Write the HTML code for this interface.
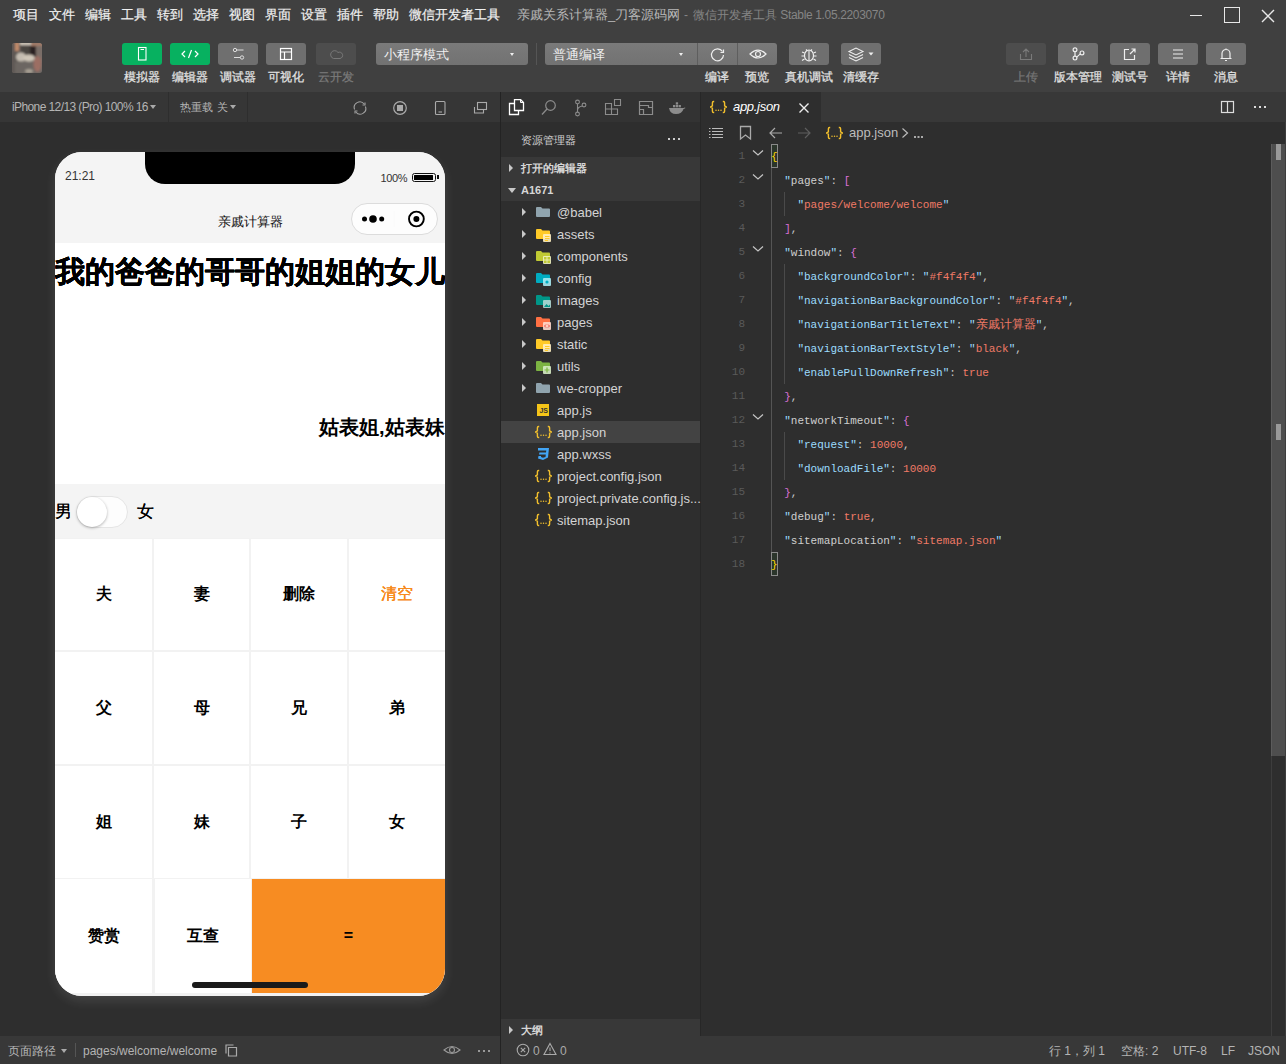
<!DOCTYPE html>
<html><head><meta charset="utf-8">
<style>
*{box-sizing:border-box;margin:0;padding:0}
html,body{width:1286px;height:1064px;overflow:hidden;background:#2e2e2e;font-family:"Liberation Sans",sans-serif;color:#ccc}
.a{position:absolute}
.top{left:0;top:0;width:1286px;height:92px;background:#404040}
.menu{top:7px;font-size:13px;color:#f0f0f0;line-height:16px;white-space:nowrap;-webkit-text-stroke:0.2px}
.title{top:7px;left:517px;font-size:13px;color:#9c9c9c;line-height:16px;white-space:nowrap}
.btn{top:43px;width:40px;height:22px;border-radius:3px;background:#6f6f6f}
.btn.g{background:#07b160}
.btn.d{background:#4d4d4d}
.lbl{top:70px;font-size:12px;line-height:15px;color:#e2e2e2;white-space:nowrap;text-align:center;width:60px;-webkit-text-stroke:0.25px}
.dd{top:43px;height:22px;border-radius:3px;background:linear-gradient(#7a7a7a,#727272);font-size:13px;color:#f0f0f0;line-height:16px;padding-top:4px}
.caret{width:0;height:0;border-left:4px solid transparent;border-right:4px solid transparent;border-top:5px solid #eee}
svg{display:block}
.ic{fill:none}
</style></head><body>
<div class="a top"></div>
<!-- menu -->
<div class="a menu" style="left:13px">项目</div>
<div class="a menu" style="left:49px">文件</div>
<div class="a menu" style="left:85px">编辑</div>
<div class="a menu" style="left:121px">工具</div>
<div class="a menu" style="left:157px">转到</div>
<div class="a menu" style="left:193px">选择</div>
<div class="a menu" style="left:229px">视图</div>
<div class="a menu" style="left:265px">界面</div>
<div class="a menu" style="left:301px">设置</div>
<div class="a menu" style="left:337px">插件</div>
<div class="a menu" style="left:373px">帮助</div>
<div class="a menu" style="left:409px">微信开发者工具</div>
<div class="a title" style="color:#b8b8b8">亲戚关系计算器_刀客源码网</div><div class="a title" style="left:684px;font-size:12px;color:#858585">-</div><div class="a title" style="left:693px;font-size:12px;color:#858585">微信开发者工具 <span style="letter-spacing:-0.35px">Stable 1.05.2203070</span></div>
<!-- window controls -->
<div class="a" style="left:1190px;top:14.5px;width:12px;height:1px;background:#e8e8e8"></div>
<div class="a" style="left:1224px;top:7px;width:16px;height:16px;border:1.5px solid #e8e8e8"></div>
<svg class="a" style="left:1261px;top:9px" width="14" height="14"><path d="M1 1L13 13M13 1L1 13" stroke="#e8e8e8" stroke-width="1.4"/></svg>

<!-- avatar -->
<svg class="a" style="left:12px;top:43px" width="30" height="30"><defs><filter id="bl" x="-20%" y="-20%" width="140%" height="140%"><feGaussianBlur stdDeviation="1.3"/></filter><clipPath id="cp"><rect width="30" height="30" rx="2.5"/></clipPath></defs><g clip-path="url(#cp)"><rect width="30" height="30" fill="#6e6864"/><g filter="url(#bl)">
<rect x="-2" y="-2" width="12" height="34" fill="#5e5854"/>
<rect x="3" y="-1" width="4" height="9" fill="#c08a6a"/>
<rect x="8" y="-1" width="11" height="3" fill="#d6ccbe"/>
<rect x="9" y="3" width="12" height="10" fill="#4a4541"/>
<rect x="19" y="-1" width="13" height="4" fill="#a07a68"/>
<rect x="18" y="3" width="6" height="11" fill="#2a2020"/>
<rect x="24" y="3" width="8" height="16" fill="#7a6e68"/>
<ellipse cx="9" cy="14" rx="5" ry="4.5" fill="#c4bcb0"/>
<ellipse cx="17" cy="15" rx="6" ry="3.5" fill="#cfc6b8"/>
<rect x="3" y="19" width="19" height="12" fill="#6c6662"/>
<ellipse cx="25.5" cy="21" rx="4" ry="8" fill="#9c6e64"/>
<ellipse cx="17" cy="28" rx="4" ry="2" fill="#a8a094"/>
</g></g></svg>

<!-- toolbar buttons -->
<div class="a btn g" style="left:122px"></div>
<div class="a btn g" style="left:170px"></div>
<div class="a btn" style="left:218px"></div>
<div class="a btn" style="left:266px"></div>
<div class="a btn d" style="left:316px"></div>
<div class="a lbl" style="left:112px">模拟器</div>
<div class="a lbl" style="left:160px">编辑器</div>
<div class="a lbl" style="left:208px">调试器</div>
<div class="a lbl" style="left:256px">可视化</div>
<div class="a lbl" style="left:306px;color:#7a7a7a">云开发</div>

<div class="a dd" style="left:376px;width:152px;padding-left:8px">小程序模式<div class="a caret" style="left:134px;top:10px;border-left-width:2.5px;border-right-width:2.5px;border-top-width:3px"></div></div>
<div class="a" style="left:536px;top:43px;width:1px;height:22px;background:#555"></div>
<div class="a dd" style="left:545px;width:232px;padding-left:8px">普通编译<div class="a caret" style="left:134px;top:10px;border-left-width:2.5px;border-right-width:2.5px;border-top-width:3px"></div></div>


<!-- button icons -->
<svg class="a" style="left:122px;top:43px" width="40" height="22"><rect x="16.5" y="4.5" width="7.5" height="12.5" fill="none" stroke="#fff" stroke-width="1.1"/><line x1="18.5" y1="6.5" x2="22" y2="6.5" stroke="#fff" stroke-width="1"/></svg>
<svg class="a" style="left:170px;top:43px" width="40" height="22"><path d="M15 8L12 11L15 14M25 8L28 11L25 14M21.5 7L18.5 15" class="ic" stroke="#fff" stroke-width="1.2"/></svg>
<svg class="a" style="left:218px;top:43px" width="40" height="22"><path d="M16 7H25.5M16 14.5H23" stroke="#ddd" stroke-width="1"/><circle cx="17" cy="7" r="1.7" fill="#6f6f6f" stroke="#ddd" stroke-width="1"/><circle cx="24" cy="14.5" r="1.7" fill="#6f6f6f" stroke="#ddd" stroke-width="1"/></svg>
<svg class="a" style="left:266px;top:43px" width="40" height="22"><rect x="14.5" y="5.5" width="11" height="11" class="ic" stroke="#fff" stroke-width="1.2"/><path d="M14.5 9H25.5M18.5 9V16.5" class="ic" stroke="#fff" stroke-width="1.2"/></svg>
<svg class="a" style="left:316px;top:43px" width="40" height="22"><path d="M17.5 15.5A4 4 0 1 1 22 9.5A3.2 3.2 0 1 1 24 15.5Z" fill="none" stroke="#787878" stroke-width="1"/></svg>
<!-- compile seg -->
<div class="a" style="left:697px;top:43px;width:1px;height:22px;background:#5e5e5e"></div>
<div class="a" style="left:737px;top:43px;width:1px;height:22px;background:#5e5e5e"></div>
<svg class="a" style="left:698px;top:43px" width="40" height="22"><path d="M24.5 8.5A6 6 0 1 0 25.5 12" class="ic" stroke="#eee" stroke-width="1.2"/><path d="M22.5 9.5L25.5 9.5L25.5 6.5" class="ic" stroke="#eee" stroke-width="1.2"/></svg>
<svg class="a" style="left:738px;top:43px" width="40" height="22"><path d="M12 11Q20 3 28 11Q20 19 12 11Z" class="ic" stroke="#eee" stroke-width="1.2"/><circle cx="20" cy="11" r="2.5" class="ic" stroke="#eee" stroke-width="1.2"/></svg>
<div class="a lbl" style="left:687px">编译</div>
<div class="a lbl" style="left:727px">预览</div>
<div class="a btn" style="left:789px"></div>
<div class="a btn" style="left:841px"></div>
<svg class="a" style="left:789px;top:43px" width="40" height="22"><ellipse cx="20" cy="12.5" rx="4.5" ry="5.5" class="ic" stroke="#eee" stroke-width="1.2"/><path d="M20 7V18M17 6.5L18.5 8M23 6.5L21.5 8M15.5 10L13 9M15.5 13H12.5M15.5 16L13 17.5M24.5 10L27 9M24.5 13H27.5M24.5 16L27 17.5" class="ic" stroke="#eee" stroke-width="1.1"/></svg>
<svg class="a" style="left:841px;top:43px" width="40" height="22"><path d="M8 8.5L15 5L22 8.5L15 12Z M8 11.5L15 15L22 11.5 M8 14.5L15 18L22 14.5" fill="none" stroke="#eee" stroke-width="1.1"/><path d="M27.5 9.5H32.5L30 12.5Z" fill="#eee"/></svg>
<div class="a lbl" style="left:779px">真机调试</div>
<div class="a lbl" style="left:831px">清缓存</div>
<!-- right group -->
<div class="a btn d" style="left:1006px"></div>
<div class="a btn" style="left:1058px"></div>
<div class="a btn" style="left:1110px"></div>
<div class="a btn" style="left:1158px"></div>
<div class="a btn" style="left:1206px"></div>
<svg class="a" style="left:1006px;top:43px" width="40" height="22"><path d="M14.5 11V16.5H25.5V11M20 14V6M17 9L20 6L23 9" class="ic" stroke="#7a7a7a" stroke-width="1.1"/></svg>
<svg class="a" style="left:1058px;top:43px" width="40" height="22"><circle cx="17" cy="6.8" r="1.9" fill="none" stroke="#eee" stroke-width="1.2"/><circle cx="17" cy="15.1" r="1.9" fill="none" stroke="#eee" stroke-width="1.2"/><circle cx="24" cy="9.9" r="1.9" fill="none" stroke="#eee" stroke-width="1.2"/><path d="M17 8.7V13.2M18.7 14.1L22.3 10.9" fill="none" stroke="#eee" stroke-width="1.2"/></svg>
<svg class="a" style="left:1110px;top:43px" width="40" height="22"><path d="M19 6.5H14.5V16.5H24.5V12M20 11L25 6M21.5 6H25V9.5" class="ic" stroke="#eee" stroke-width="1.2"/></svg>
<svg class="a" style="left:1158px;top:43px" width="40" height="22"><path d="M15 7H25M15 11H25M15 15H25" class="ic" stroke="#eee" stroke-width="1.2"/></svg>
<svg class="a" style="left:1206px;top:43px" width="40" height="22"><path d="M16 15V10.5A4 4 0 0 1 24 10.5V15M14.5 15.5H25.5M20 5.5V6.5M19 17.5H21" class="ic" stroke="#eee" stroke-width="1.2"/></svg>
<div class="a lbl" style="left:996px;color:#767676">上传</div>
<div class="a lbl" style="left:1048px">版本管理</div>
<div class="a lbl" style="left:1100px">测试号</div>
<div class="a lbl" style="left:1148px">详情</div>
<div class="a lbl" style="left:1196px">消息</div>

<!-- second row bars -->
<div class="a" style="left:0;top:92px;width:500px;height:30px;background:#363636"></div>
<div class="a" style="left:168px;top:92px;width:1px;height:30px;background:#2e2e2e"></div>
<div class="a" style="left:247px;top:92px;width:1px;height:30px;background:#2e2e2e"></div>
<div class="a" style="left:12px;top:99px;font-size:12px;line-height:16px;color:#b4b4b4;white-space:nowrap;letter-spacing:-0.6px">iPhone 12/13 (Pro) 100% 16</div>
<div class="a caret" style="left:150px;top:105px;border-top-color:#aaa;border-left-width:3.5px;border-right-width:3.5px;border-top-width:4px"></div>
<div class="a" style="left:180px;top:99px;font-size:11px;line-height:16px;color:#b4b4b4;white-space:nowrap">热重载</div><div class="a" style="left:217px;top:99px;font-size:11px;line-height:16px;color:#b4b4b4;white-space:nowrap">关</div>
<div class="a caret" style="left:230px;top:105px;border-top-color:#aaa;border-left-width:3.5px;border-right-width:3.5px;border-top-width:4px"></div>
<svg class="a" style="left:352px;top:100px" width="16" height="16"><path d="M2.6 9.5A5.6 5.6 0 0 1 12.2 4M13.4 6.5A5.6 5.6 0 0 1 3.8 12" fill="none" stroke="#a0a0a0" stroke-width="1.1"/><path d="M13 2.5V5H10.5M3 13.5V11H5.5" fill="none" stroke="#a0a0a0" stroke-width="1.1"/></svg>
<svg class="a" style="left:392px;top:100px" width="16" height="16"><circle cx="8" cy="8" r="6.3" class="ic" stroke="#aaa" stroke-width="1.2"/><rect x="5" y="5" width="6" height="6" fill="#aaa"/></svg>
<svg class="a" style="left:432px;top:100px" width="16" height="16"><rect x="3.5" y="1.5" width="9.5" height="13" rx="1" fill="none" stroke="#aaa" stroke-width="1.1"/><path d="M6.5 12H10" stroke="#aaa" stroke-width="1.1"/></svg>
<svg class="a" style="left:472px;top:100px" width="16" height="16"><rect x="5.5" y="2.5" width="9" height="7" class="ic" stroke="#aaa" stroke-width="1.1"/><path d="M2.5 7V13H11.5V10" class="ic" stroke="#aaa" stroke-width="1.1"/></svg>

<div class="a" style="left:500px;top:92px;width:1px;height:944px;background:#232323"></div>
<div class="a" style="left:501px;top:92px;width:199px;height:30px;background:#333"></div>
<div class="a" style="left:700px;top:92px;width:1px;height:944px;background:#272727"></div>
<div class="a" style="left:701px;top:92px;width:585px;height:30px;background:#383838"></div>
<div class="a" style="left:701px;top:92px;width:120px;height:30px;background:#2e2e2e"></div>


<!-- phone -->
<div class="a" style="left:55px;top:152px;width:390px;height:844px;border-radius:27px;background:#fff;overflow:hidden;box-shadow:0 5px 12px rgba(255,255,255,0.11)">
  <div class="a" style="left:0;top:0;width:390px;height:91px;background:#f4f4f4"></div>
  <div class="a" style="left:90px;top:0;width:210px;height:32px;background:#000;border-radius:0 0 20px 20px"></div>
  <div class="a" style="left:10px;top:16px;font-size:12px;line-height:16px;color:#333">21:21</div>
  <div class="a" style="left:325.5px;top:19px;font-size:11px;line-height:14px;color:#333;letter-spacing:-0.4px">100%</div>
  <div class="a" style="left:357px;top:20.5px;width:24px;height:9px;border:1.3px solid #111;border-radius:2.5px"><div class="a" style="left:1px;top:1px;width:18.5px;height:5px;background:#000;border-radius:0.5px"></div></div>
  <div class="a" style="left:382px;top:23px;width:1.5px;height:3.5px;background:#111"></div>
  <div class="a" style="left:0;top:60px;width:390px;text-align:center;font-size:13px;line-height:20px;color:#111">亲戚计算器</div>
  <div class="a" style="left:296px;top:51px;width:87px;height:32px;border-radius:16px;border:1px solid #dcdcdc;background:#fdfdfd"></div>
  <svg class="a" style="left:296px;top:51px" width="87" height="32"><circle cx="13.5" cy="16" r="2.5" fill="#000"/><circle cx="22" cy="16" r="3.8" fill="#000"/><circle cx="30.7" cy="16" r="2.5" fill="#000"/><line x1="43.3" y1="8" x2="43.3" y2="24" stroke="#fafafa" stroke-width="1"/><circle cx="65.4" cy="16" r="7.4" fill="none" stroke="#000" stroke-width="1.9"/><circle cx="65.4" cy="16" r="3" fill="#000"/></svg>
  <div class="a" style="left:0;top:98px;width:420px;font-size:30px;font-weight:bold;line-height:44px;color:#000;white-space:nowrap;text-shadow:0.4px 0 0 #000,-0.4px 0 0 #000,0 0.3px 0 #000">我的爸爸的哥哥的姐姐的女儿</div>
  <div class="a" style="left:264px;top:261px;font-size:20px;font-weight:bold;line-height:28px;color:#000;white-space:nowrap">姑表姐,姑表妹</div>
  <div class="a" style="left:0;top:332px;width:390px;height:54px;background:#f4f4f4"></div>
  <div class="a" style="left:0;top:350px;font-size:17px;line-height:20px;color:#000;text-shadow:0.3px 0 0 #000">男</div>
  <div class="a" style="left:21px;top:344px;width:52px;height:32px;border-radius:16px;background:#fdfdfd;border:1px solid #e5e5e5"></div>
  <div class="a" style="left:22px;top:345px;width:30px;height:30px;border-radius:15px;background:#fff;box-shadow:0 1px 3px rgba(0,0,0,0.3)"></div>
  <div class="a" style="left:82px;top:350px;font-size:17px;line-height:20px;color:#000;text-shadow:0.3px 0 0 #000">女</div>
  <div class="a" style="left:0;top:386px;width:390px;height:458px;background:#f2f2f2"></div><div class="a" style="left:0px;top:387px;width:97px;height:111px;background:#fff;display:flex;align-items:center;justify-content:center;font-size:16px;font-weight:bold;color:#000">夫</div><div class="a" style="left:99px;top:387px;width:95px;height:111px;background:#fff;display:flex;align-items:center;justify-content:center;font-size:16px;font-weight:bold;color:#000">妻</div><div class="a" style="left:196px;top:387px;width:96px;height:111px;background:#fff;display:flex;align-items:center;justify-content:center;font-size:16px;font-weight:bold;color:#000">删除</div><div class="a" style="left:294px;top:387px;width:96px;height:111px;background:#fff;display:flex;align-items:center;justify-content:center;font-size:16px;font-weight:normal;color:#f78a1c;text-shadow:0.35px 0 0 #f78a1c,-0.2px 0 0 #f78a1c">清空</div><div class="a" style="left:0px;top:500px;width:97px;height:112px;background:#fff;display:flex;align-items:center;justify-content:center;font-size:16px;font-weight:bold;color:#000">父</div><div class="a" style="left:99px;top:500px;width:95px;height:112px;background:#fff;display:flex;align-items:center;justify-content:center;font-size:16px;font-weight:bold;color:#000">母</div><div class="a" style="left:196px;top:500px;width:96px;height:112px;background:#fff;display:flex;align-items:center;justify-content:center;font-size:16px;font-weight:bold;color:#000">兄</div><div class="a" style="left:294px;top:500px;width:96px;height:112px;background:#fff;display:flex;align-items:center;justify-content:center;font-size:16px;font-weight:bold;color:#000">弟</div><div class="a" style="left:0px;top:614px;width:97px;height:112px;background:#fff;display:flex;align-items:center;justify-content:center;font-size:16px;font-weight:bold;color:#000">姐</div><div class="a" style="left:99px;top:614px;width:95px;height:112px;background:#fff;display:flex;align-items:center;justify-content:center;font-size:16px;font-weight:bold;color:#000">妹</div><div class="a" style="left:196px;top:614px;width:96px;height:112px;background:#fff;display:flex;align-items:center;justify-content:center;font-size:16px;font-weight:bold;color:#000">子</div><div class="a" style="left:294px;top:614px;width:96px;height:112px;background:#fff;display:flex;align-items:center;justify-content:center;font-size:16px;font-weight:bold;color:#000">女</div><div class="a" style="left:0;top:727px;width:97px;height:114px;background:#fff;display:flex;align-items:center;justify-content:center;font-size:16px;font-weight:bold;color:#000">赞赏</div><div class="a" style="left:100px;top:727px;width:96px;height:114px;background:#fff;display:flex;align-items:center;justify-content:center;font-size:16px;font-weight:bold;color:#000">互查</div><div class="a" style="left:197px;top:727px;width:193px;height:114px;background:#f78c22;display:flex;align-items:center;justify-content:center;font-size:16px;font-weight:bold;color:#000">=</div>
  <div class="a" style="left:137px;top:830px;width:116px;height:6px;border-radius:3px;background:#1a1a1a"></div>
</div>


<!-- explorer -->
<div class="a" style="left:501px;top:122px;width:199px;height:914px;background:#2e2e2e"></div>
<svg class="a" style="left:508px;top:99px" width="18" height="18"><path d="M6.5 0.5H12.5L15.5 3.5V11.5H6.5Z" fill="none" stroke="#fff" stroke-width="1.3"/><path d="M12.5 0.5V3.5H15.5" fill="none" stroke="#fff" stroke-width="1"/><path d="M6.5 4.5H1.5V15.5H10.5V11.5" fill="none" stroke="#fff" stroke-width="1.3"/></svg>
<svg class="a" style="left:540px;top:99px" width="18" height="18"><circle cx="10.5" cy="6.5" r="4.8" fill="none" stroke="#8c8c8c" stroke-width="1.2"/><path d="M7 10L2 15.5" stroke="#8c8c8c" stroke-width="1.3"/></svg>
<svg class="a" style="left:572px;top:99px" width="18" height="18"><circle cx="5.5" cy="3" r="1.9" fill="none" stroke="#8c8c8c" stroke-width="1.1"/><circle cx="5.5" cy="15" r="1.9" fill="none" stroke="#8c8c8c" stroke-width="1.1"/><circle cx="12" cy="6" r="1.9" fill="none" stroke="#8c8c8c" stroke-width="1.1"/><path d="M5.5 5V13M5.5 11.5Q5.5 8 10.3 7" fill="none" stroke="#8c8c8c" stroke-width="1.1"/></svg>
<svg class="a" style="left:604px;top:99px" width="18" height="18"><path d="M1.5 4.5H7.5V15.5H1.5ZM1.5 10H13.5V15.5H7.5M10.5 0.5H16.5V6.5H10.5Z" fill="none" stroke="#8c8c8c" stroke-width="1.1"/></svg>
<svg class="a" style="left:637px;top:99px" width="18" height="18"><path d="M2.5 2.5H15.5V15.5H2.5Z M2.5 6.5H11.5V8.5H15.5 M2.5 10.5H6.5V15.5" fill="none" stroke="#8c8c8c" stroke-width="1.2"/></svg>
<svg class="a" style="left:668px;top:99px" width="18" height="18"><path d="M1 9H15.5Q17 8 17.5 9Q16 10 15.5 10Q14 15 8 15Q2 15 1 9Z" fill="#8c8c8c"/><rect x="5" y="6" width="2.3" height="2.3" fill="#8c8c8c"/><rect x="7.8" y="6" width="2.3" height="2.3" fill="#8c8c8c"/><rect x="10.6" y="6" width="2.3" height="2.3" fill="#8c8c8c"/><rect x="7.8" y="3.3" width="2.3" height="2.3" fill="#8c8c8c"/></svg>

<div class="a" style="left:521px;top:132px;font-size:11px;line-height:16px;color:#cfcfcf">资源管理器</div>
<div class="a" style="left:668px;top:138px;width:2px;height:2px;background:#ccc;box-shadow:5px 0 #ccc,10px 0 #ccc"></div>
<div class="a" style="left:501px;top:157px;width:199px;height:44px;background:#383838"></div>
<div class="a" style="left:509px;top:164px;width:0;height:0;border-top:4px solid transparent;border-bottom:4px solid transparent;border-left:4px solid #c8c8c8"></div>
<div class="a" style="left:521px;top:160px;font-size:11px;line-height:16px;color:#d6d6d6;font-weight:bold">打开的编辑器</div>
<div class="a" style="left:508px;top:188px;width:0;height:0;border-left:4px solid transparent;border-right:4px solid transparent;border-top:5px solid #c8c8c8"></div>
<div class="a" style="left:521px;top:182px;font-size:11px;line-height:16px;color:#d6d6d6;font-weight:bold">A1671</div>
<div class="a" style="left:501px;top:421px;width:199px;height:22px;background:#434343"></div>
<div class="a" style="left:522px;top:208px;width:0;height:0;border-top:4px solid transparent;border-bottom:4px solid transparent;border-left:4px solid #c8c8c8"></div><svg class="a" style="left:536px;top:207px" width="16" height="14"><path d="M0 1Q0 0 1 0H5L6.5 1.5H13Q14 1.5 14 2.5V9Q14 10 13 10H1Q0 10 0 9Z" fill="#90a4ae"/></svg><div class="a" style="left:557px;top:205px;font-size:13px;line-height:16px;color:#d4d4d4;white-space:nowrap">@babel</div><div class="a" style="left:522px;top:230px;width:0;height:0;border-top:4px solid transparent;border-bottom:4px solid transparent;border-left:4px solid #c8c8c8"></div><svg class="a" style="left:536px;top:229px" width="16" height="14"><path d="M0 1Q0 0 1 0H5L6.5 1.5H13Q14 1.5 14 2.5V9Q14 10 13 10H1Q0 10 0 9Z" fill="#ffca28"/><rect x="7" y="5" width="8" height="8" rx="1" fill="#fff0c0" opacity="0.9"/><path d="M9 7.5H13.5M9 9.5H13.5M9 11.5H12" stroke="#ffca28" stroke-width="1"/></svg><div class="a" style="left:557px;top:227px;font-size:13px;line-height:16px;color:#d4d4d4;white-space:nowrap">assets</div><div class="a" style="left:522px;top:252px;width:0;height:0;border-top:4px solid transparent;border-bottom:4px solid transparent;border-left:4px solid #c8c8c8"></div><svg class="a" style="left:536px;top:251px" width="16" height="14"><path d="M0 1Q0 0 1 0H5L6.5 1.5H13Q14 1.5 14 2.5V9Q14 10 13 10H1Q0 10 0 9Z" fill="#c0ca33"/><rect x="7" y="5" width="8" height="8" rx="1" fill="#f0f3c0" opacity="0.9"/><path d="M8 6H10.5V8.5H8ZM11.5 6H14V8.5H11.5ZM8 9.5H10.5V12H8ZM11.5 9.5H14V12H11.5Z" fill="#c0ca33"/></svg><div class="a" style="left:557px;top:249px;font-size:13px;line-height:16px;color:#d4d4d4;white-space:nowrap">components</div><div class="a" style="left:522px;top:274px;width:0;height:0;border-top:4px solid transparent;border-bottom:4px solid transparent;border-left:4px solid #c8c8c8"></div><svg class="a" style="left:536px;top:273px" width="16" height="14"><path d="M0 1Q0 0 1 0H5L6.5 1.5H13Q14 1.5 14 2.5V9Q14 10 13 10H1Q0 10 0 9Z" fill="#00acc1"/><rect x="7" y="5" width="8" height="8" rx="1" fill="#a8eaf2" opacity="0.9"/><circle cx="11" cy="9" r="1.6" fill="#00acc1"/></svg><div class="a" style="left:557px;top:271px;font-size:13px;line-height:16px;color:#d4d4d4;white-space:nowrap">config</div><div class="a" style="left:522px;top:296px;width:0;height:0;border-top:4px solid transparent;border-bottom:4px solid transparent;border-left:4px solid #c8c8c8"></div><svg class="a" style="left:536px;top:295px" width="16" height="14"><path d="M0 1Q0 0 1 0H5L6.5 1.5H13Q14 1.5 14 2.5V9Q14 10 13 10H1Q0 10 0 9Z" fill="#009688"/><rect x="7" y="5" width="8" height="8" rx="1" fill="#b0d8d4" opacity="0.9"/><path d="M8 12L10.5 9L12.5 11L14 9.5V12Z" fill="#009688"/></svg><div class="a" style="left:557px;top:293px;font-size:13px;line-height:16px;color:#d4d4d4;white-space:nowrap">images</div><div class="a" style="left:522px;top:318px;width:0;height:0;border-top:4px solid transparent;border-bottom:4px solid transparent;border-left:4px solid #c8c8c8"></div><svg class="a" style="left:536px;top:317px" width="16" height="14"><path d="M0 1Q0 0 1 0H5L6.5 1.5H13Q14 1.5 14 2.5V9Q14 10 13 10H1Q0 10 0 9Z" fill="#ff7043"/><rect x="7" y="5" width="8" height="8" rx="1" fill="#ffd8cc" opacity="0.9"/><path d="M10 7.5L8.5 9L10 10.5M12 7.5L13.5 9L12 10.5" fill="none" stroke="#e53935" stroke-width="0.9"/></svg><div class="a" style="left:557px;top:315px;font-size:13px;line-height:16px;color:#d4d4d4;white-space:nowrap">pages</div><div class="a" style="left:522px;top:340px;width:0;height:0;border-top:4px solid transparent;border-bottom:4px solid transparent;border-left:4px solid #c8c8c8"></div><svg class="a" style="left:536px;top:339px" width="16" height="14"><path d="M0 1Q0 0 1 0H5L6.5 1.5H13Q14 1.5 14 2.5V9Q14 10 13 10H1Q0 10 0 9Z" fill="#ffca28"/><rect x="7" y="5" width="8" height="8" rx="1" fill="#fff0c0" opacity="0.9"/><path d="M9 7.5H13.5M9 9.5H13.5M9 11.5H12" stroke="#ffca28" stroke-width="1"/></svg><div class="a" style="left:557px;top:337px;font-size:13px;line-height:16px;color:#d4d4d4;white-space:nowrap">static</div><div class="a" style="left:522px;top:362px;width:0;height:0;border-top:4px solid transparent;border-bottom:4px solid transparent;border-left:4px solid #c8c8c8"></div><svg class="a" style="left:536px;top:361px" width="16" height="14"><path d="M0 1Q0 0 1 0H5L6.5 1.5H13Q14 1.5 14 2.5V9Q14 10 13 10H1Q0 10 0 9Z" fill="#7cb342"/><rect x="7" y="5" width="8" height="8" rx="1" fill="#d6ecc4" opacity="0.9"/><path d="M11 6.5V11.5M8.5 9H13.5" stroke="#7cb342" stroke-width="1.2"/></svg><div class="a" style="left:557px;top:359px;font-size:13px;line-height:16px;color:#d4d4d4;white-space:nowrap">utils</div><div class="a" style="left:522px;top:384px;width:0;height:0;border-top:4px solid transparent;border-bottom:4px solid transparent;border-left:4px solid #c8c8c8"></div><svg class="a" style="left:536px;top:383px" width="16" height="14"><path d="M0 1Q0 0 1 0H5L6.5 1.5H13Q14 1.5 14 2.5V9Q14 10 13 10H1Q0 10 0 9Z" fill="#90a4ae"/></svg><div class="a" style="left:557px;top:381px;font-size:13px;line-height:16px;color:#d4d4d4;white-space:nowrap">we-cropper</div><div class="a" style="left:537px;top:404px;width:12px;height:12px;background:#f5c518;font-size:7px;line-height:14px;color:#333;text-align:right;padding-right:1px;font-weight:bold">JS</div><div class="a" style="left:557px;top:403px;font-size:13px;line-height:16px;color:#d4d4d4;white-space:nowrap">app.js</div><svg class="a" style="left:535px;top:424px" width="17" height="16"><path d="M4.2 2.5H3.6Q2.4 2.5 2.4 3.8V6.8L0.6 8L2.4 9.2V12.2Q2.4 13.5 3.6 13.5H4.2M12.8 2.5H13.4Q14.6 2.5 14.6 3.8V6.8L16.4 8L14.6 9.2V12.2Q14.6 13.5 13.4 13.5H12.8" fill="none" stroke="#f3c02c" stroke-width="1.4"/><circle cx="6" cy="11.2" r="0.75" fill="#f3c02c"/><circle cx="8.5" cy="11.2" r="0.75" fill="#f3c02c"/><circle cx="11" cy="11.2" r="0.75" fill="#f3c02c"/></svg><div class="a" style="left:557px;top:425px;font-size:13px;line-height:16px;color:#d4d4d4;white-space:nowrap">app.json</div><svg class="a" style="left:536px;top:447px" width="14" height="14"><path d="M2 1H13L12 10.5L7 13L2 11.5L2.5 9H5L5 10L7 10.8L9.5 10L9.8 7.5H3L3.4 5.5H10L10.3 3.5H2Z" fill="#42a5f5"/></svg><div class="a" style="left:557px;top:447px;font-size:13px;line-height:16px;color:#d4d4d4;white-space:nowrap">app.wxss</div><svg class="a" style="left:535px;top:468px" width="17" height="16"><path d="M4.2 2.5H3.6Q2.4 2.5 2.4 3.8V6.8L0.6 8L2.4 9.2V12.2Q2.4 13.5 3.6 13.5H4.2M12.8 2.5H13.4Q14.6 2.5 14.6 3.8V6.8L16.4 8L14.6 9.2V12.2Q14.6 13.5 13.4 13.5H12.8" fill="none" stroke="#f3c02c" stroke-width="1.4"/><circle cx="6" cy="11.2" r="0.75" fill="#f3c02c"/><circle cx="8.5" cy="11.2" r="0.75" fill="#f3c02c"/><circle cx="11" cy="11.2" r="0.75" fill="#f3c02c"/></svg><div class="a" style="left:557px;top:469px;font-size:13px;line-height:16px;color:#d4d4d4;white-space:nowrap">project.config.json</div><svg class="a" style="left:535px;top:490px" width="17" height="16"><path d="M4.2 2.5H3.6Q2.4 2.5 2.4 3.8V6.8L0.6 8L2.4 9.2V12.2Q2.4 13.5 3.6 13.5H4.2M12.8 2.5H13.4Q14.6 2.5 14.6 3.8V6.8L16.4 8L14.6 9.2V12.2Q14.6 13.5 13.4 13.5H12.8" fill="none" stroke="#f3c02c" stroke-width="1.4"/><circle cx="6" cy="11.2" r="0.75" fill="#f3c02c"/><circle cx="8.5" cy="11.2" r="0.75" fill="#f3c02c"/><circle cx="11" cy="11.2" r="0.75" fill="#f3c02c"/></svg><div class="a" style="left:557px;top:491px;font-size:13px;line-height:16px;color:#d4d4d4;white-space:nowrap">project.private.config.js...</div><svg class="a" style="left:535px;top:512px" width="17" height="16"><path d="M4.2 2.5H3.6Q2.4 2.5 2.4 3.8V6.8L0.6 8L2.4 9.2V12.2Q2.4 13.5 3.6 13.5H4.2M12.8 2.5H13.4Q14.6 2.5 14.6 3.8V6.8L16.4 8L14.6 9.2V12.2Q14.6 13.5 13.4 13.5H12.8" fill="none" stroke="#f3c02c" stroke-width="1.4"/><circle cx="6" cy="11.2" r="0.75" fill="#f3c02c"/><circle cx="8.5" cy="11.2" r="0.75" fill="#f3c02c"/><circle cx="11" cy="11.2" r="0.75" fill="#f3c02c"/></svg><div class="a" style="left:557px;top:513px;font-size:13px;line-height:16px;color:#d4d4d4;white-space:nowrap">sitemap.json</div>
<div class="a" style="left:501px;top:1019px;width:199px;height:17px;background:#383838"></div>
<div class="a" style="left:509px;top:1026px;width:0;height:0;border-top:4px solid transparent;border-bottom:4px solid transparent;border-left:4px solid #c8c8c8"></div>
<div class="a" style="left:521px;top:1022px;font-size:11px;line-height:16px;color:#d6d6d6;font-weight:bold">大纲</div>


<!-- editor -->
<div class="a" style="left:701px;top:122px;width:585px;height:914px;background:#2e2e2e"></div>
<svg class="a" style="left:710px;top:99px" width="17" height="16"><path d="M4.2 2.5H3.6Q2.4 2.5 2.4 3.8V6.8L0.6 8L2.4 9.2V12.2Q2.4 13.5 3.6 13.5H4.2M12.8 2.5H13.4Q14.6 2.5 14.6 3.8V6.8L16.4 8L14.6 9.2V12.2Q14.6 13.5 13.4 13.5H12.8" fill="none" stroke="#f3c02c" stroke-width="1.4"/><circle cx="6" cy="11.2" r="0.75" fill="#f3c02c"/><circle cx="8.5" cy="11.2" r="0.75" fill="#f3c02c"/><circle cx="11" cy="11.2" r="0.75" fill="#f3c02c"/></svg>
<div class="a" style="left:733px;top:99px;font-size:13px;line-height:16px;color:#fff;font-style:italic;white-space:nowrap;letter-spacing:-0.3px">app.json</div>
<svg class="a" style="left:798px;top:102px" width="12" height="12"><path d="M1.5 1.5L10.5 10.5M10.5 1.5L1.5 10.5" stroke="#eee" stroke-width="1.4"/></svg>
<svg class="a" style="left:1220px;top:100px" width="15" height="14"><rect x="1.5" y="1.5" width="12" height="11" fill="none" stroke="#ddd" stroke-width="1.2"/><path d="M7.5 1.5V12.5" stroke="#ddd" stroke-width="1.2"/></svg>
<div class="a" style="left:1254px;top:106px;width:2px;height:2px;background:#ddd;box-shadow:5px 0 #ddd,10px 0 #ddd"></div>
<svg class="a" style="left:708px;top:126px" width="16" height="14"><path d="M4 2.5H15M4 5.5H15M4 8.5H15M4 11.5H15M1 2.5H2.5M1 5.5H2.5M1 8.5H2.5M1 11.5H2.5" stroke="#bbb" stroke-width="1.1"/></svg>
<svg class="a" style="left:739px;top:125px" width="14" height="16"><path d="M1.5 1.5H11.5V14L6.5 10L1.5 14Z" fill="none" stroke="#aaa" stroke-width="1.3"/></svg>
<svg class="a" style="left:768px;top:126px" width="16" height="14"><path d="M14 7H2M7 2L2 7L7 12" fill="none" stroke="#aaa" stroke-width="1.2"/></svg>
<svg class="a" style="left:796px;top:126px" width="16" height="14"><path d="M2 7H14M9 2L14 7L9 12" fill="none" stroke="#5e5e5e" stroke-width="1.2"/></svg>
<svg class="a" style="left:826px;top:125px" width="17" height="16"><path d="M4.2 2.5H3.6Q2.4 2.5 2.4 3.8V6.8L0.6 8L2.4 9.2V12.2Q2.4 13.5 3.6 13.5H4.2M12.8 2.5H13.4Q14.6 2.5 14.6 3.8V6.8L16.4 8L14.6 9.2V12.2Q14.6 13.5 13.4 13.5H12.8" fill="none" stroke="#f3c02c" stroke-width="1.4"/><circle cx="6" cy="11.2" r="0.75" fill="#f3c02c"/><circle cx="8.5" cy="11.2" r="0.75" fill="#f3c02c"/><circle cx="11" cy="11.2" r="0.75" fill="#f3c02c"/></svg>
<div class="a" style="left:849px;top:125px;font-size:13px;line-height:16px;color:#bdbdbd;white-space:nowrap">app.json</div>
<svg class="a" style="left:901px;top:127px" width="8" height="12"><path d="M1.5 1.5L6.5 6L1.5 10.5" fill="none" stroke="#bbb" stroke-width="1.2"/></svg>
<div class="a" style="left:914px;top:136px;width:2px;height:2px;background:#aaa;box-shadow:3.5px 0 #aaa,7px 0 #aaa"></div>
<div class="a" style="left:715px;top:148px;width:30px;text-align:right;font-size:11px;line-height:16px;color:#5a5a5a;font-family:Liberation Mono,monospace">1</div><div class="a" style="z-index:2;left:771px;top:149px;font-size:11px;line-height:16px;font-family:Liberation Mono,monospace;white-space:pre;color:#ccc"><span style="color:#ffd700">{</span></div><div class="a" style="left:715px;top:172px;width:30px;text-align:right;font-size:11px;line-height:16px;color:#5a5a5a;font-family:Liberation Mono,monospace">2</div><div class="a" style="z-index:2;left:771px;top:173px;font-size:11px;line-height:16px;font-family:Liberation Mono,monospace;white-space:pre;color:#ccc">  <span style="color:#9cdcfe">"</span><span style="color:#cfcfcf">pages</span><span style="color:#9cdcfe">"</span><span style="color:#c8c8c8">: </span><span style="color:#da70d6">[</span></div><div class="a" style="left:715px;top:196px;width:30px;text-align:right;font-size:11px;line-height:16px;color:#5a5a5a;font-family:Liberation Mono,monospace">3</div><div class="a" style="z-index:2;left:771px;top:197px;font-size:11px;line-height:16px;font-family:Liberation Mono,monospace;white-space:pre;color:#ccc">    <span style="color:#9cdcfe">"</span><span style="color:#f07a66">pages/welcome/welcome</span><span style="color:#9cdcfe">"</span></div><div class="a" style="left:715px;top:220px;width:30px;text-align:right;font-size:11px;line-height:16px;color:#5a5a5a;font-family:Liberation Mono,monospace">4</div><div class="a" style="z-index:2;left:771px;top:221px;font-size:11px;line-height:16px;font-family:Liberation Mono,monospace;white-space:pre;color:#ccc">  <span style="color:#da70d6">]</span><span style="color:#c8c8c8">,</span></div><div class="a" style="left:715px;top:244px;width:30px;text-align:right;font-size:11px;line-height:16px;color:#5a5a5a;font-family:Liberation Mono,monospace">5</div><div class="a" style="z-index:2;left:771px;top:245px;font-size:11px;line-height:16px;font-family:Liberation Mono,monospace;white-space:pre;color:#ccc">  <span style="color:#9cdcfe">"</span><span style="color:#cfcfcf">window</span><span style="color:#9cdcfe">"</span><span style="color:#c8c8c8">: </span><span style="color:#da70d6">{</span></div><div class="a" style="left:715px;top:268px;width:30px;text-align:right;font-size:11px;line-height:16px;color:#5a5a5a;font-family:Liberation Mono,monospace">6</div><div class="a" style="z-index:2;left:771px;top:269px;font-size:11px;line-height:16px;font-family:Liberation Mono,monospace;white-space:pre;color:#ccc">    <span style="color:#9cdcfe">"</span><span style="color:#9cdcfe">backgroundColor</span><span style="color:#9cdcfe">"</span><span style="color:#c8c8c8">: </span><span style="color:#9cdcfe">"</span><span style="color:#f07a66">#f4f4f4</span><span style="color:#9cdcfe">"</span><span style="color:#c8c8c8">,</span></div><div class="a" style="left:715px;top:292px;width:30px;text-align:right;font-size:11px;line-height:16px;color:#5a5a5a;font-family:Liberation Mono,monospace">7</div><div class="a" style="z-index:2;left:771px;top:293px;font-size:11px;line-height:16px;font-family:Liberation Mono,monospace;white-space:pre;color:#ccc">    <span style="color:#9cdcfe">"</span><span style="color:#9cdcfe">navigationBarBackgroundColor</span><span style="color:#9cdcfe">"</span><span style="color:#c8c8c8">: </span><span style="color:#9cdcfe">"</span><span style="color:#f07a66">#f4f4f4</span><span style="color:#9cdcfe">"</span><span style="color:#c8c8c8">,</span></div><div class="a" style="left:715px;top:316px;width:30px;text-align:right;font-size:11px;line-height:16px;color:#5a5a5a;font-family:Liberation Mono,monospace">8</div><div class="a" style="z-index:2;left:771px;top:317px;font-size:11px;line-height:16px;font-family:Liberation Mono,monospace;white-space:pre;color:#ccc">    <span style="color:#9cdcfe">"</span><span style="color:#9cdcfe">navigationBarTitleText</span><span style="color:#9cdcfe">"</span><span style="color:#c8c8c8">: </span><span style="color:#9cdcfe">"</span><span style="color:#f07a66"><span style="font-size:12px">亲戚计算器</span></span><span style="color:#9cdcfe">"</span><span style="color:#c8c8c8">,</span></div><div class="a" style="left:715px;top:340px;width:30px;text-align:right;font-size:11px;line-height:16px;color:#5a5a5a;font-family:Liberation Mono,monospace">9</div><div class="a" style="z-index:2;left:771px;top:341px;font-size:11px;line-height:16px;font-family:Liberation Mono,monospace;white-space:pre;color:#ccc">    <span style="color:#9cdcfe">"</span><span style="color:#9cdcfe">navigationBarTextStyle</span><span style="color:#9cdcfe">"</span><span style="color:#c8c8c8">: </span><span style="color:#9cdcfe">"</span><span style="color:#f07a66">black</span><span style="color:#9cdcfe">"</span><span style="color:#c8c8c8">,</span></div><div class="a" style="left:715px;top:364px;width:30px;text-align:right;font-size:11px;line-height:16px;color:#5a5a5a;font-family:Liberation Mono,monospace">10</div><div class="a" style="z-index:2;left:771px;top:365px;font-size:11px;line-height:16px;font-family:Liberation Mono,monospace;white-space:pre;color:#ccc">    <span style="color:#9cdcfe">"</span><span style="color:#9cdcfe">enablePullDownRefresh</span><span style="color:#9cdcfe">"</span><span style="color:#c8c8c8">: </span><span style="color:#f07a66">true</span></div><div class="a" style="left:715px;top:388px;width:30px;text-align:right;font-size:11px;line-height:16px;color:#5a5a5a;font-family:Liberation Mono,monospace">11</div><div class="a" style="z-index:2;left:771px;top:389px;font-size:11px;line-height:16px;font-family:Liberation Mono,monospace;white-space:pre;color:#ccc">  <span style="color:#da70d6">}</span><span style="color:#c8c8c8">,</span></div><div class="a" style="left:715px;top:412px;width:30px;text-align:right;font-size:11px;line-height:16px;color:#5a5a5a;font-family:Liberation Mono,monospace">12</div><div class="a" style="z-index:2;left:771px;top:413px;font-size:11px;line-height:16px;font-family:Liberation Mono,monospace;white-space:pre;color:#ccc">  <span style="color:#9cdcfe">"</span><span style="color:#cfcfcf">networkTimeout</span><span style="color:#9cdcfe">"</span><span style="color:#c8c8c8">: </span><span style="color:#da70d6">{</span></div><div class="a" style="left:715px;top:436px;width:30px;text-align:right;font-size:11px;line-height:16px;color:#5a5a5a;font-family:Liberation Mono,monospace">13</div><div class="a" style="z-index:2;left:771px;top:437px;font-size:11px;line-height:16px;font-family:Liberation Mono,monospace;white-space:pre;color:#ccc">    <span style="color:#9cdcfe">"</span><span style="color:#9cdcfe">request</span><span style="color:#9cdcfe">"</span><span style="color:#c8c8c8">: </span><span style="color:#f07a66">10000</span><span style="color:#c8c8c8">,</span></div><div class="a" style="left:715px;top:460px;width:30px;text-align:right;font-size:11px;line-height:16px;color:#5a5a5a;font-family:Liberation Mono,monospace">14</div><div class="a" style="z-index:2;left:771px;top:461px;font-size:11px;line-height:16px;font-family:Liberation Mono,monospace;white-space:pre;color:#ccc">    <span style="color:#9cdcfe">"</span><span style="color:#9cdcfe">downloadFile</span><span style="color:#9cdcfe">"</span><span style="color:#c8c8c8">: </span><span style="color:#f07a66">10000</span></div><div class="a" style="left:715px;top:484px;width:30px;text-align:right;font-size:11px;line-height:16px;color:#5a5a5a;font-family:Liberation Mono,monospace">15</div><div class="a" style="z-index:2;left:771px;top:485px;font-size:11px;line-height:16px;font-family:Liberation Mono,monospace;white-space:pre;color:#ccc">  <span style="color:#da70d6">}</span><span style="color:#c8c8c8">,</span></div><div class="a" style="left:715px;top:508px;width:30px;text-align:right;font-size:11px;line-height:16px;color:#5a5a5a;font-family:Liberation Mono,monospace">16</div><div class="a" style="z-index:2;left:771px;top:509px;font-size:11px;line-height:16px;font-family:Liberation Mono,monospace;white-space:pre;color:#ccc">  <span style="color:#9cdcfe">"</span><span style="color:#cfcfcf">debug</span><span style="color:#9cdcfe">"</span><span style="color:#c8c8c8">: </span><span style="color:#f07a66">true</span><span style="color:#c8c8c8">,</span></div><div class="a" style="left:715px;top:532px;width:30px;text-align:right;font-size:11px;line-height:16px;color:#5a5a5a;font-family:Liberation Mono,monospace">17</div><div class="a" style="z-index:2;left:771px;top:533px;font-size:11px;line-height:16px;font-family:Liberation Mono,monospace;white-space:pre;color:#ccc">  <span style="color:#9cdcfe">"</span><span style="color:#cfcfcf">sitemapLocation</span><span style="color:#9cdcfe">"</span><span style="color:#c8c8c8">: </span><span style="color:#9cdcfe">"</span><span style="color:#f07a66">sitemap.json</span><span style="color:#9cdcfe">"</span></div><div class="a" style="left:715px;top:556px;width:30px;text-align:right;font-size:11px;line-height:16px;color:#5a5a5a;font-family:Liberation Mono,monospace">18</div><div class="a" style="z-index:2;left:771px;top:557px;font-size:11px;line-height:16px;font-family:Liberation Mono,monospace;white-space:pre;color:#ccc"><span style="color:#ffd700">}</span></div><svg class="a" style="left:752px;top:149px" width="12" height="8"><path d="M1 1.5L6 6L11 1.5" fill="none" stroke="#c5c5c5" stroke-width="1.2"/></svg><svg class="a" style="left:752px;top:173px" width="12" height="8"><path d="M1 1.5L6 6L11 1.5" fill="none" stroke="#c5c5c5" stroke-width="1.2"/></svg><svg class="a" style="left:752px;top:245px" width="12" height="8"><path d="M1 1.5L6 6L11 1.5" fill="none" stroke="#c5c5c5" stroke-width="1.2"/></svg><svg class="a" style="left:752px;top:413px" width="12" height="8"><path d="M1 1.5L6 6L11 1.5" fill="none" stroke="#c5c5c5" stroke-width="1.2"/></svg><div class="a" style="left:771px;top:144px;width:7px;height:24px;border:1px solid #8a8a8a;background:rgba(40,60,40,0.5)"></div><div class="a" style="left:771px;top:552px;width:7px;height:24px;border:1px solid #8a8a8a;background:rgba(40,60,40,0.5)"></div><div class="a" style="left:771px;top:168px;width:1px;height:384px;background:#555"></div><div class="a" style="left:784px;top:192px;width:1px;height:24px;background:#4a4a4a"></div><div class="a" style="left:784px;top:264px;width:1px;height:120px;background:#4a4a4a"></div><div class="a" style="left:784px;top:432px;width:1px;height:48px;background:#4a4a4a"></div><div class="a" style="left:1271px;top:144px;width:14px;height:612px;background:#4e4e4e;border-left:1px solid #5c5c5c"></div><div class="a" style="left:1276px;top:144px;width:5px;height:16px;background:#999"></div><div class="a" style="left:1276px;top:424px;width:5px;height:16px;background:#999"></div><div class="a" style="left:1271px;top:756px;width:1px;height:280px;background:#3d3d3d"></div><div class="a" style="left:1285px;top:122px;width:1px;height:914px;background:#3d3d3d"></div>
<div class="a" style="left:0;top:1036px;width:1286px;height:28px;background:#383838"></div>
<div class="a" style="left:500px;top:1036px;width:1px;height:28px;background:#232323"></div>
<div class="a" style="left:8px;top:1043px;font-size:12px;line-height:16px;color:#b4b4b4">页面路径</div>
<div class="a caret" style="left:61px;top:1049px;border-top-color:#aaa;border-left-width:3px;border-right-width:3px;border-top-width:4px"></div>
<div class="a" style="left:75px;top:1043px;width:1px;height:14px;background:#555"></div>
<div class="a" style="left:83px;top:1043px;font-size:12px;line-height:16px;color:#b4b4b4;white-space:nowrap">pages/welcome/welcome</div>
<svg class="a" style="left:224px;top:1043px" width="14" height="14"><path d="M4.5 4.5H12.5V13H4.5Z M2 10.5V2H9.5" fill="none" stroke="#aaa" stroke-width="1.2"/></svg>
<svg class="a" style="left:443px;top:1044px" width="18" height="12"><path d="M1 6Q9 -1 17 6Q9 13 1 6Z" fill="none" stroke="#999" stroke-width="1.1"/><circle cx="9" cy="6" r="2.5" fill="none" stroke="#999" stroke-width="1.1"/></svg>
<div class="a" style="left:478px;top:1050px;width:2px;height:2px;background:#999;box-shadow:5px 0 #999,10px 0 #999"></div>
<svg class="a" style="left:516px;top:1043px" width="14" height="14"><circle cx="7" cy="7" r="5.8" fill="none" stroke="#aaa" stroke-width="1.1"/><path d="M4.8 4.8L9.2 9.2M9.2 4.8L4.8 9.2" stroke="#aaa" stroke-width="1.1"/></svg>
<div class="a" style="left:533px;top:1043px;font-size:12px;line-height:16px;color:#aaa">0</div>
<svg class="a" style="left:543px;top:1042px" width="14" height="14"><path d="M7 1.5L13 12.5H1Z M7 5.5V9M7 10.5V11.5" fill="none" stroke="#aaa" stroke-width="1.1"/></svg>
<div class="a" style="left:560px;top:1043px;font-size:12px;line-height:16px;color:#aaa">0</div>
<div class="a" style="left:1049px;top:1043px;font-size:12px;line-height:16px;color:#b4b4b4;white-space:nowrap">行 1，列 1</div>
<div class="a" style="left:1121px;top:1043px;font-size:12px;line-height:16px;color:#b4b4b4;white-space:nowrap">空格: 2</div>
<div class="a" style="left:1173px;top:1043px;font-size:12px;line-height:16px;color:#b4b4b4;white-space:nowrap">UTF-8</div>
<div class="a" style="left:1221px;top:1043px;font-size:12px;line-height:16px;color:#b4b4b4;white-space:nowrap">LF</div>
<div class="a" style="left:1248px;top:1043px;font-size:12px;line-height:16px;color:#b4b4b4;white-space:nowrap">JSON</div>

</body></html>
